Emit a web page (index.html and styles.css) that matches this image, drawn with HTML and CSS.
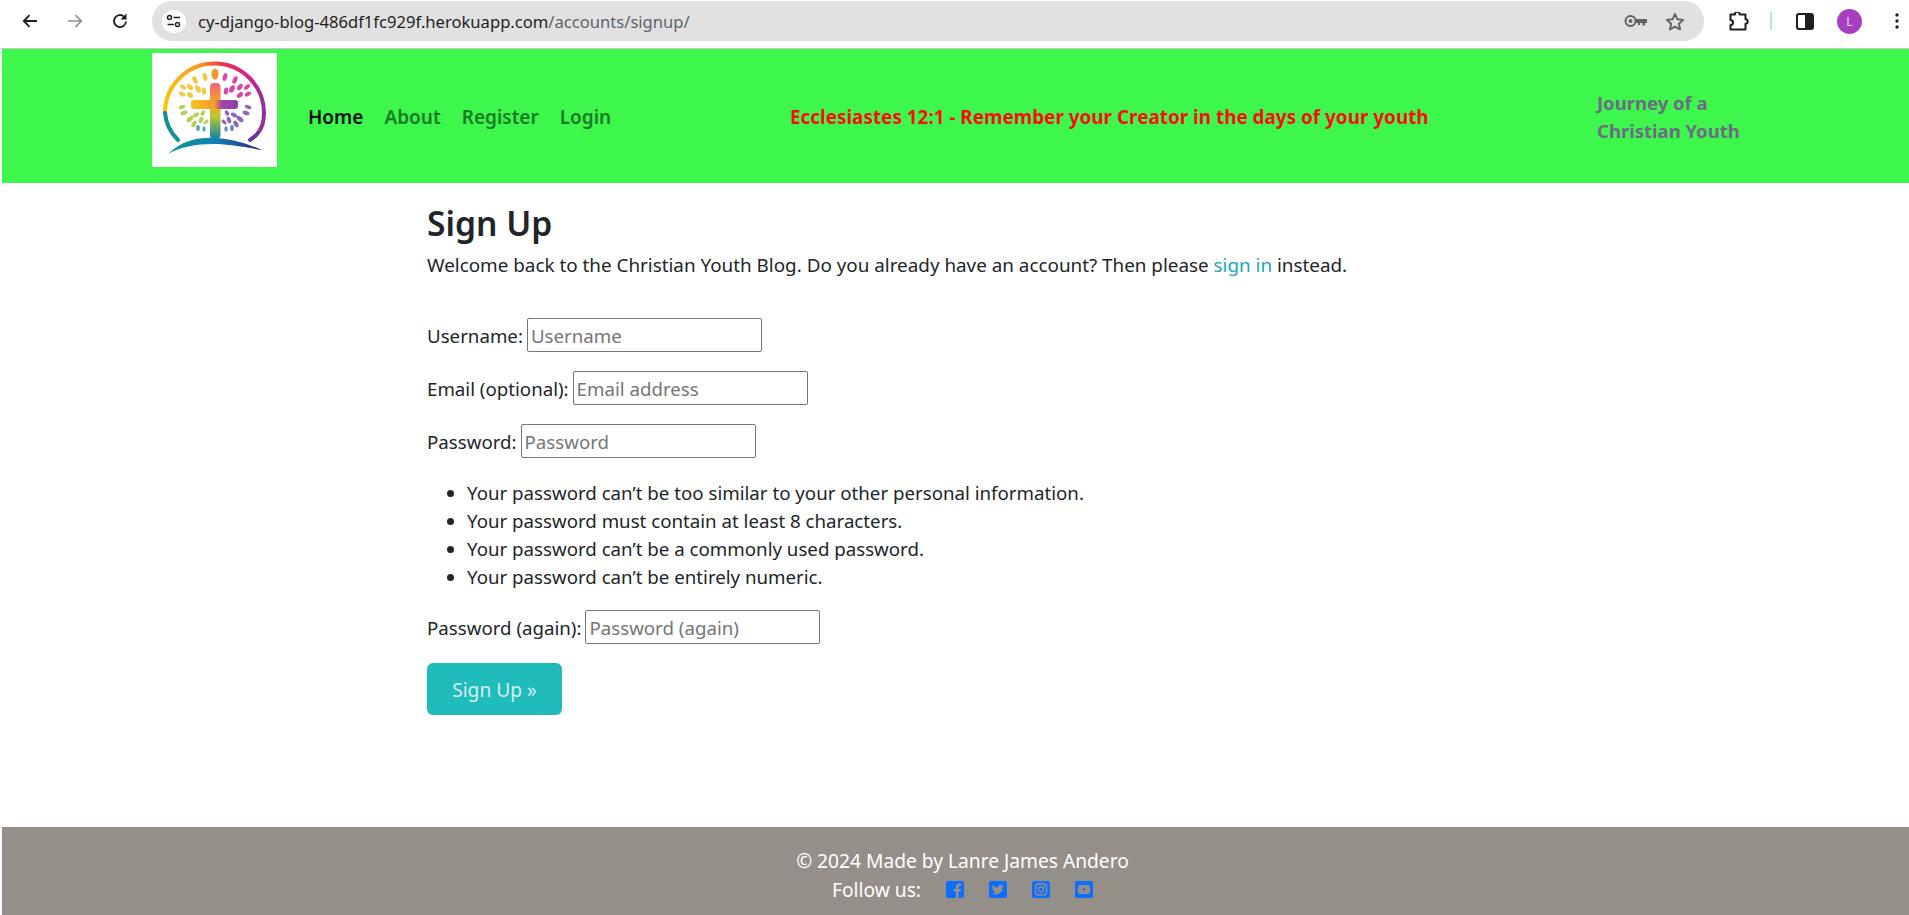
FILE: index.html
```html
<!DOCTYPE html>
<html lang="en">
<head>
    <meta charset="UTF-8">
    <meta name="viewport" content="width=device-width, initial-scale=1.0">
    <title>Sign Up</title>
    <link rel="stylesheet" href="styles.css">
</head>
<body>
    <!-- browser toolbar -->
    <div class="toolbar">
        <svg class="tool-back" width="18" height="18" viewBox="0 0 18 18"><path d="M16 9H3M8.500 3.200 2.800 9l5.700 5.800" fill="none" stroke="#1f1f1f" stroke-width="1.900"/></svg>
        <svg class="tool-forward" width="18" height="18" viewBox="0 0 18 18"><path d="M2 9h13M9.500 3.200 15.200 9l-5.700 5.800" fill="none" stroke="#8f8f8f" stroke-width="1.700"/></svg>
        <svg class="tool-reload" width="18" height="18" viewBox="0 0 18 18"><path d="M15 9.500A6 6 0 1 1 13 4.600" fill="none" stroke="#1f1f1f" stroke-width="1.900"/><path d="M15.500 1.500v6h-6z" fill="#1f1f1f"/></svg>
        <div class="omnibox">
            <span class="site-chip">
                <svg width="16" height="14" viewBox="0 0 16 14"><circle cx="3.500" cy="3.500" r="2" fill="none" stroke="#1f1f1f" stroke-width="1.500"/><path d="M7.500 3.500H14M1.500 10.500H8" stroke="#1f1f1f" stroke-width="1.500"/><circle cx="11.500" cy="10.500" r="2" fill="none" stroke="#1f1f1f" stroke-width="1.500"/></svg>
            </span>
            <span class="url"><span class="url-host">cy-django-blog-486df1fc929f.herokuapp.com</span>/accounts/signup/</span>
            <svg class="omni-key" width="24" height="14" viewBox="0 0 24 14"><circle cx="6.500" cy="7" r="5" fill="none" stroke="#5f6368" stroke-width="2"/><circle cx="6.500" cy="7" r="2" fill="#5f6368"/><path d="M11 5h12v4h-2v2.500h-2.500V9H16v2h-2V9h-3z" fill="#5f6368"/></svg>
            <svg class="omni-star" width="20" height="19" viewBox="0 0 20 19"><path d="m10 2 2.400 5.300 5.800.6-4.300 3.900 1.200 5.700L10 14.600l-5.100 2.900 1.200-5.700-4.300-3.900 5.800-.6z" fill="none" stroke="#5f6368" stroke-width="1.900" stroke-linejoin="round"/></svg>
        </div>
        <svg class="tool-puzzle" width="22" height="19" viewBox="0 0 22 19"><path d="M2.500 2.500h4.500a2.300 2.300 0 0 1 4.300-1.500l.6 1.500h5.600v4.800a2.200 2.200 0 0 1 0 4.400v5.800H2.500v-4.600a2.400 2.400 0 0 0 0-5z" fill="none" stroke="#1f1f1f" stroke-width="2" stroke-linejoin="round"/></svg>
        <span class="tool-sep"></span>
        <svg class="tool-panel" width="18" height="17" viewBox="0 0 18 17"><rect x="1" y="1" width="16" height="15" rx="2" fill="none" stroke="#1f1f1f" stroke-width="2"/><rect x="9" y="1" width="8" height="15" fill="#1f1f1f"/></svg>
        <span class="avatar">L</span>
        <svg class="tool-menu" width="4" height="16" viewBox="0 0 4 16"><circle cx="2" cy="2" r="1.700" fill="#1f1f1f"/><circle cx="2" cy="8" r="1.700" fill="#1f1f1f"/><circle cx="2" cy="14" r="1.700" fill="#1f1f1f"/></svg>
    </div>

    <div class="page">
        <header class="site-header">
            <a class="logo" href="#">
                <svg width="125" height="114" viewBox="0 0 125 114">
                    <defs>
                        <linearGradient id="ringGrad" x1="0" x2="1" y1="0" y2="0">
                            <stop offset="0" stop-color="#fcc30f"/>
                            <stop offset="0.350" stop-color="#f79a1e"/>
                            <stop offset="0.600" stop-color="#ee2a55"/>
                            <stop offset="0.850" stop-color="#d6218c"/>
                            <stop offset="1" stop-color="#8e2f9e"/>
                        </linearGradient>
                        <linearGradient id="groundGrad" x1="0" x2="1" y1="0" y2="0">
                            <stop offset="0" stop-color="#0b9b8f"/>
                            <stop offset="0.500" stop-color="#1380b4"/>
                            <stop offset="1" stop-color="#2f237f"/>
                        </linearGradient>
                        <linearGradient id="stemGrad" x1="0" x2="0" y1="0" y2="1">
                            <stop offset="0" stop-color="#f0657f"/>
                            <stop offset="0.350" stop-color="#f5a623"/>
                            <stop offset="0.600" stop-color="#bcc92e"/>
                            <stop offset="1" stop-color="#137fa8"/>
                        </linearGradient>
                        <linearGradient id="barGrad" x1="0" x2="1" y1="0" y2="0">
                            <stop offset="0" stop-color="#f7c31a"/>
                            <stop offset="0.500" stop-color="#f39a2c"/>
                            <stop offset="0.650" stop-color="#a945a8"/>
                            <stop offset="1" stop-color="#8a3ea8"/>
                        </linearGradient>
                    </defs>
                    <path d="M13 60A49.500 49.500 0 0 1 112 60C112 68 110 75 106 80" fill="none" stroke="url(#ringGrad)" stroke-width="4"/>
                    <path d="M13 60C14 72 20 81 26 87" fill="none" stroke="#128f97" stroke-width="4" stroke-linecap="round"/>
                    <path d="M106 80C104 83 101 85 98 87" fill="none" stroke="#6a35a0" stroke-width="4" stroke-linecap="round"/>
                    <path d="M16 101C30 87 48 84 64 85C82 86 98 92 110 97C92 94 76 91 62 91C44 91 28 94 16 101z" fill="url(#groundGrad)"/>
                    <ellipse cx="63" cy="21" rx="3.500" ry="5.500" fill="#f59a23"/>
                    <rect x="58" y="30" width="10.500" height="56" rx="4" fill="url(#stemGrad)"/>
                    <rect x="39" y="47" width="47" height="9" rx="3" fill="url(#barGrad)"/>
                    <g class="leaves" fill="#f9bd1e">
                        <ellipse cx="53" cy="24" rx="2.200" ry="4" transform="rotate(-15 53 24)"/>
                        <ellipse cx="43" cy="27" rx="2.200" ry="4" transform="rotate(-25 43 27)"/>
                        <ellipse cx="46" cy="36" rx="2.500" ry="4" transform="rotate(-25 46 36)"/>
                        <ellipse cx="38" cy="34" rx="2.200" ry="3.600" transform="rotate(-40 38 34)"/>
                        <ellipse cx="31" cy="34" rx="2" ry="3.400" transform="rotate(-50 31 34)"/>
                        <ellipse cx="30" cy="41" rx="2" ry="3.400" transform="rotate(-60 30 41)"/>
                        <ellipse cx="38" cy="42" rx="2.200" ry="3.600" transform="rotate(-50 38 42)"/>
                        <ellipse cx="52" cy="38" rx="2.200" ry="3.600" transform="rotate(-10 52 38)"/>
                    </g>
                    <g class="leaves" fill="#a6c93c">
                        <ellipse cx="30" cy="54" rx="1.800" ry="3.400" transform="rotate(70 30 54)"/>
                        <ellipse cx="32" cy="60" rx="2" ry="3.600" transform="rotate(70 32 60)"/>
                        <ellipse cx="38" cy="66" rx="2.200" ry="4" transform="rotate(50 38 66)"/>
                        <ellipse cx="44" cy="62" rx="2" ry="3.400" transform="rotate(60 44 62)"/>
                        <ellipse cx="51" cy="60" rx="1.800" ry="3" transform="rotate(30 51 60)"/>
                        <ellipse cx="42" cy="71" rx="2.200" ry="3.600" transform="rotate(30 42 71)"/>
                        <ellipse cx="49" cy="67" rx="2" ry="3.400" transform="rotate(20 49 67)"/>
                        <ellipse cx="54" cy="69" rx="1.700" ry="3" transform="rotate(50 54 69)"/>
                    </g>
                    <g class="leaves" fill="#2b9a95">
                        <ellipse cx="46" cy="75" rx="1.800" ry="3"/>
                        <ellipse cx="52" cy="76" rx="1.600" ry="2.700"/>
                    </g>
                    <g class="leaves" fill="#d9259a">
                        <ellipse cx="73" cy="24" rx="2.200" ry="4" transform="rotate(15 73 24)"/>
                        <ellipse cx="83" cy="27" rx="2.200" ry="4" transform="rotate(25 83 27)"/>
                        <ellipse cx="80" cy="36" rx="2.500" ry="4" transform="rotate(25 80 36)"/>
                        <ellipse cx="88" cy="34" rx="2.200" ry="3.600" transform="rotate(40 88 34)"/>
                        <ellipse cx="95" cy="34" rx="2" ry="3.400" transform="rotate(50 95 34)"/>
                        <ellipse cx="96" cy="41" rx="2" ry="3.400" transform="rotate(60 96 41)"/>
                        <ellipse cx="88" cy="42" rx="2.200" ry="3.600" transform="rotate(50 88 42)"/>
                        <ellipse cx="74" cy="38" rx="2.200" ry="3.600" transform="rotate(10 74 38)"/>
                    </g>
                    <g class="leaves" fill="#7c4bb0">
                        <ellipse cx="96" cy="54" rx="1.800" ry="3.400" transform="rotate(-70 96 54)"/>
                        <ellipse cx="94" cy="60" rx="2" ry="3.600" transform="rotate(-70 94 60)"/>
                        <ellipse cx="88" cy="66" rx="2.200" ry="4" transform="rotate(-50 88 66)"/>
                        <ellipse cx="82" cy="62" rx="2" ry="3.400" transform="rotate(-60 82 62)"/>
                        <ellipse cx="75" cy="60" rx="1.800" ry="3" transform="rotate(-30 75 60)"/>
                        <ellipse cx="84" cy="71" rx="2.200" ry="3.600" transform="rotate(-30 84 71)"/>
                        <ellipse cx="77" cy="67" rx="2" ry="3.400" transform="rotate(-20 77 67)"/>
                        <ellipse cx="72" cy="69" rx="1.700" ry="3" transform="rotate(-50 72 69)"/>
                    </g>
                    <g class="leaves" fill="#3f6fc0">
                        <ellipse cx="80" cy="75" rx="1.800" ry="3"/>
                        <ellipse cx="74" cy="76" rx="1.600" ry="2.700"/>
                    </g>
                </svg>
            </a>
            <nav class="main-nav">
                <a class="nav-link active" href="#">Home</a>
                <a class="nav-link" href="#">About</a>
                <a class="nav-link" href="#">Register</a>
                <a class="nav-link" href="#">Login</a>
            </nav>
            <div class="verse">Ecclesiastes 12:1 - Remember your Creator in the days of your youth</div>
            <div class="tagline">Journey of a<br>Christian Youth</div>
        </header>

        <main class="content">
            <h1>Sign Up</h1>
            <p class="intro">Welcome back to the Christian Youth Blog. Do you already have an account? Then please <a href="#">sign in</a> instead.</p>
            <form class="signup-form">
                <div class="field">
                    <label for="username">Username:</label>
                    <input type="text" id="username" placeholder="Username">
                </div>
                <div class="field">
                    <label for="email">Email (optional):</label>
                    <input type="email" id="email" placeholder="Email address">
                </div>
                <div class="field">
                    <label for="password1">Password:</label>
                    <input type="password" id="password1" placeholder="Password">
                </div>
                <ul class="help-list">
                    <li>Your password can’t be too similar to your other personal information.</li>
                    <li>Your password must contain at least 8 characters.</li>
                    <li>Your password can’t be a commonly used password.</li>
                    <li>Your password can’t be entirely numeric.</li>
                </ul>
                <div class="field">
                    <label for="password2">Password (again):</label>
                    <input type="password" id="password2" placeholder="Password (again)">
                </div>
                <button type="button" class="signup-btn">Sign Up »</button>
            </form>
        </main>

        <footer class="site-footer">
            <p class="copyright">© 2024 Made by Lanre James Andero</p>
            <p class="follow">
                <span class="follow-label">Follow us:</span>
                <a class="social" href="#"><svg width="18" height="17" viewBox="0 0 18 17"><rect width="18" height="17" rx="2" fill="#0d6efd"/><path d="M12.500 17v-6.500h2.200l.4-2.600h-2.600V6.300c0-.8.3-1.300 1.400-1.300h1.300V2.700c-.5-.1-1.200-.2-1.900-.2-2.100 0-3.400 1.200-3.400 3.500v1.900H7.600v2.600h2.300V17z" fill="#958f8a"/></svg></a>
                <a class="social" href="#"><svg width="18" height="17" viewBox="0 0 18 17"><rect width="18" height="17" rx="2" fill="#0d6efd"/><path d="M15 5.200c-.5.200-1 .4-1.500.4.500-.3.900-.8 1.100-1.400-.5.300-1 .5-1.600.6a2.500 2.500 0 0 0-4.300 2.300C6.600 6.500 4.800 5.600 3.600 4.100c-.7 1.100-.3 2.600.8 3.300-.4 0-.8-.1-1.100-.3 0 1.200.8 2.300 2 2.500-.4.100-.8.100-1.100 0 .3 1 1.200 1.700 2.300 1.700-1 .8-2.300 1.200-3.600 1 1.100.7 2.400 1.100 3.800 1.100 4.600 0 7.200-3.900 7-7.300.5-.4.900-.8 1.300-1.300z" fill="#958f8a"/></svg></a>
                <a class="social" href="#"><svg width="18" height="17" viewBox="0 0 18 17"><rect width="18" height="17" rx="2" fill="#0d6efd"/><rect x="3.500" y="3" width="11" height="11" rx="3" fill="none" stroke="#958f8a" stroke-width="1.300"/><circle cx="9" cy="8.500" r="2.500" fill="none" stroke="#958f8a" stroke-width="1.300"/><circle cx="12" cy="5.500" r=".8" fill="#958f8a"/></svg></a>
                <a class="social" href="#"><svg width="18" height="17" viewBox="0 0 18 17"><rect width="18" height="17" rx="2" fill="#0d6efd"/><rect x="3" y="4" width="12" height="9" rx="2.500" fill="#958f8a"/><path d="m8 6.800 2.500 1.700L8 10.200z" fill="#0d6efd"/></svg></a>
            </p>
        </footer>
    </div>
</body>
</html>
```

FILE: styles.css
```css
html, body {
    margin: 0;
    height: 100%;
}

body {
    font-family: "Noto Sans", "Open Sans", sans-serif;
    color: #212529;
    background-color: white;
    display: flex;
    flex-direction: column;
    overflow: hidden;
}

/* Browser toolbar */
.toolbar {
    height: 49px;
    flex: none;
    box-sizing: border-box;
    padding-bottom: 6px;
    display: flex;
    align-items: center;
    border-bottom: 1px solid #c9c9c9;
}

.tool-back {
    margin-left: 21px;
}

.tool-forward {
    margin-left: 27px;
}

.tool-reload {
    margin-left: 27px;
}

.omnibox {
    width: 1552px;
    height: 40px;
    margin-left: 23px;
    display: flex;
    align-items: center;
    background-color: #e1e1e1;
    border-radius: 20px;
}

.site-chip {
    width: 24px;
    height: 23px;
    margin-left: 10px;
    display: flex;
    align-items: center;
    justify-content: center;
    background-color: white;
    border-radius: 50%;
}

.url {
    margin-left: 12px;
    font-size: 16.600px;
    color: #5f6368;
    white-space: nowrap;
}

.url-host {
    color: #1f1f1f;
}

.omni-key {
    margin-left: auto;
}

.omni-star {
    margin-left: 17px;
    margin-right: 19px;
}

.tool-puzzle {
    margin-left: 24px;
}

.tool-sep {
    width: 2px;
    height: 18px;
    margin-left: 20px;
    background-color: #b5e3f2;
}

.tool-panel {
    margin-left: 24px;
}

.avatar {
    width: 25px;
    height: 25px;
    margin-left: 23px;
    display: flex;
    align-items: center;
    justify-content: center;
    background-color: #a83fc0;
    border-radius: 50%;
    color: #f3dcf7;
    font-size: 12px;
}

.tool-menu {
    margin-left: 33px;
}

/* Page */
.page {
    flex: 1;
    display: flex;
    flex-direction: column;
    padding-left: 2px;
}

.site-header {
    height: 134px;
    flex: none;
    box-sizing: border-box;
    padding-top: 2px;
    display: grid;
    grid-template-columns: 156px 482px 807px auto;
    align-items: center;
    padding-left: 150px;
    background-color: #3ef74c;
}

.logo {
    display: block;
    align-self: start;
    width: 125px;
    height: 114px;
    margin-top: 2px;
    background-color: white;
}

.logo svg {
    display: block;
}

.leaves {
    opacity: 0.85;
}

.main-nav {
    display: flex;
    gap: 21px;
}

.nav-link {
    font-size: 19px;
    font-weight: 600;
    color: #1a7a28;
    text-decoration: none;
}

.nav-link.active {
    color: #0c130d;
}

.verse {
    font-size: 18.900px;
    font-weight: 700;
    color: #f60f0f;
    white-space: nowrap;
}

.tagline {
    font-size: 18.500px;
    font-weight: 700;
    line-height: 28px;
    color: #6c6c82;
}

.content {
    padding: 21px 0 0 425px;
}

h1 {
    margin: 0 0 9px 0;
    font-size: 33.600px;
    font-weight: 600;
    line-height: 38px;
}

.intro {
    margin: 0 0 39px 0;
    font-size: 18.850px;
    line-height: 28px;
}

.intro a {
    color: #20a8b8;
    text-decoration: none;
}

.field {
    height: 34px;
    margin-bottom: 19px;
    display: flex;
    align-items: center;
    gap: 4px;
    font-size: 18.700px;
}

.field input {
    width: 235px;
    height: 34px;
    box-sizing: border-box;
    padding: 1px 3px;
    border: 1px solid #767676;
    border-radius: 2px;
    font-family: inherit;
    font-size: 18.700px;
}

.field input::placeholder {
    color: #757575;
}

.help-list {
    margin: 21px 0 19px 0;
    padding-left: 40px;
    font-size: 18.700px;
    line-height: 28px;
}

.signup-btn {
    display: block;
    width: 135px;
    height: 52px;
    margin-top: 19px;
    border: none;
    border-radius: 6px;
    background-color: #20bcbc;
    color: #d5eeee;
    font-family: inherit;
    font-size: 19.200px;
}

.site-footer {
    margin-top: auto;
    height: 88px;
    flex: none;
    box-sizing: border-box;
    padding-top: 20px;
    padding-left: 14px;
    background-color: #958f8a;
    color: white;
    text-align: center;
    font-size: 19.200px;
}

.site-footer p {
    margin: 0;
}

.copyright {
    line-height: 27px;
}

.follow {
    display: flex;
    justify-content: center;
    align-items: center;
    gap: 25px;
    height: 30px;
}

.social {
    display: flex;
}
```
